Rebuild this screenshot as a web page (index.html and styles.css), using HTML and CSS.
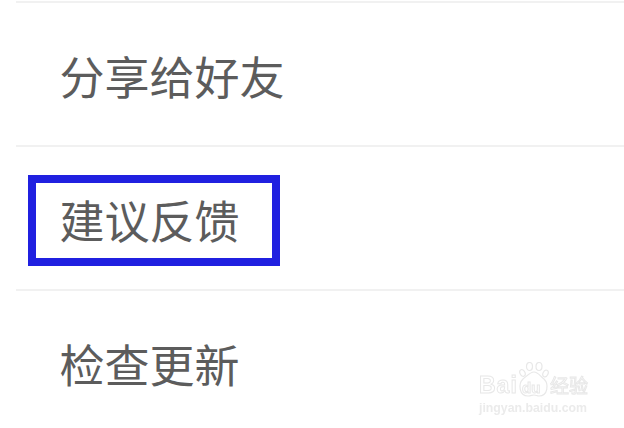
FILE: index.html
```html
<!doctype html>
<html lang="zh-CN">
<head>
	<meta charset="UTF-8">
	<title>设置</title>
	<link rel="stylesheet" href="styles.css">
</head>
<body>
	<ul class="menu">
		<li>分享给好友</li>
		<li>建议反馈</li>
		<li>检查更新</li>
	</ul>
	<div class="mark"></div>
	<div class="wm">
		<div class="wmTop">
			<span class="wmBai">Bai</span>
			<svg class="wmPaw" width="32" height="35" viewBox="0 0 32 35">
				<ellipse cx="4.5" cy="11" rx="2.5" ry="3.5" transform="rotate(-25 4.5 11)"/>
				<ellipse cx="11.5" cy="4.5" rx="3" ry="4"/>
				<ellipse cx="21" cy="4.5" rx="3" ry="4"/>
				<ellipse cx="27.5" cy="11.5" rx="2.5" ry="3.5" transform="rotate(25 27.5 11.5)"/>
				<path d="M16 10c4 0 6 4 10 7 5 5 4 17-5 17-2 0-3-1-5-1s-3 1-6 1c-9 0-10-12-5-17 4-3 7-7 11-7z"/>
			</svg>
			<span class="wmDu">du</span>
			<span class="wmJy">经验</span>
		</div>
		<div class="wmUrl">jingyan.baidu.com</div>
	</div>
</body>
</html>
```

FILE: styles.css
```css
html, body, ul, li, div, span {
	margin: 0;
	padding: 0;
}
body {
	position: relative;
	height: 428px;
	overflow: hidden;
	font-family: "Noto Sans CJK SC", "Liberation Sans", sans-serif;
	background-color: #fff;
}
ul {
	list-style: none;
}
.menu {
	margin: 1px 0 0 16px;
}
.menu li {
	height: 142px;
	line-height: 146px;
	padding-left: 43.5px;
	border-top: 2px solid #f1f1f1;
	font-size: 45px;
	color: #5c5c5c;
}
.mark {
	position: absolute;
	left: 28px;
	top: 175px;
	width: 236px;
	height: 75px;
	border: 8px solid #2020e0;
}
.wm {
	position: absolute;
	left: 479px;
	top: 361px;
	color: #fff;
	filter: blur(0.5px);
}
.wmTop {
	display: flex;
	align-items: flex-end;
	height: 36px;
}
.wmBai {
	width: 39px;
	font: bold 23px/23px "Liberation Sans", sans-serif;
	letter-spacing: 1px;
	-webkit-text-stroke: 1px #e8e8e8;
}
.wmPaw {
	flex: none;
	fill: #fff;
	stroke: #e8e8e8;
	stroke-width: 1.2;
}
.wmDu {
	width: 0;
	margin-left: -28px;
	margin-right: 28px;
	font: bold 15px/18px "Liberation Sans", sans-serif;
	-webkit-text-stroke: 1px #e8e8e8;
}
.wmJy {
	font-size: 19px;
	line-height: 25px;
	white-space: nowrap;
	-webkit-text-stroke: 1px #e8e8e8;
}
.wmUrl {
	margin-top: 4px;
	font: bold 12.3px/14px "Liberation Sans", sans-serif;
	color: #ebebeb;
	white-space: nowrap;
}
```
